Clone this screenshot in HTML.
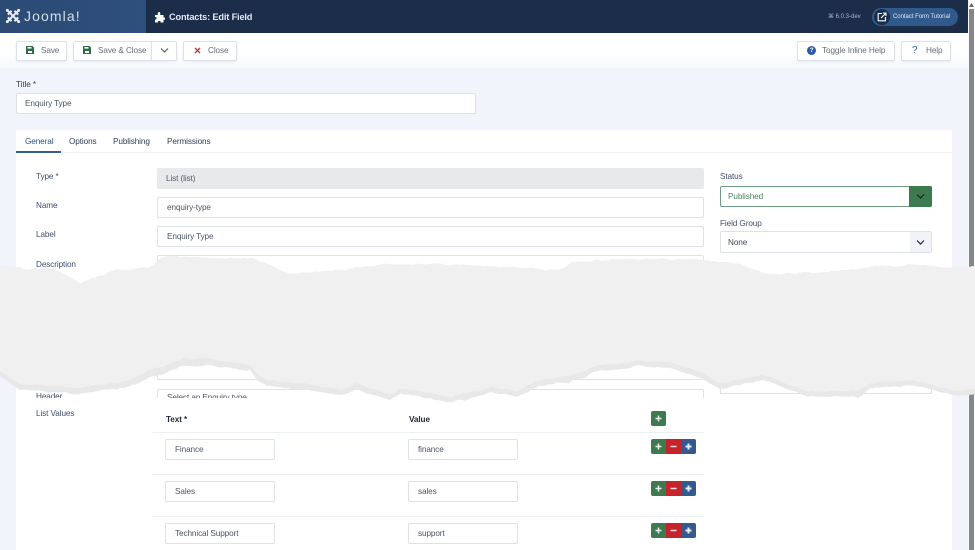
<!DOCTYPE html>
<html><head><meta charset="utf-8"><style>
*{box-sizing:border-box}
html,body{margin:0;padding:0;width:975px;height:550px;overflow:hidden;background:#f1f4fb;font-family:"Liberation Sans",sans-serif;color:#3d4a5c}
.a{position:absolute;white-space:nowrap}
#wrap{position:relative;width:975px;height:550px;overflow:hidden;filter:blur(.35px);font-size:8.2px;letter-spacing:-.1px}
.btn{position:absolute;top:41px;height:20px;background:#fff;border:1px solid #dde2ea;border-radius:2px;line-height:18px;color:#5b6570;box-shadow:0 1px 2px rgba(30,50,90,.08)}
.in{position:absolute;background:#fff;border:1px solid #dde2ea;border-radius:2px;font-size:8.2px;color:#4b5563;padding-left:9px;white-space:nowrap}
.lb{position:absolute;font-size:8.2px;color:#3f4f6b;white-space:nowrap;line-height:10px}
.tab{position:absolute;top:137px;font-size:8.2px;line-height:10px;color:#2e3f57}
.hr{position:absolute;left:152px;width:552px;height:1px;background:#eceff4}
.sq{position:absolute;width:15px;height:15px;color:#fff;text-align:center}
.sq svg{position:absolute;left:4px;top:4px}
.g{background:#3f7a4f}.r{background:#c5242c}.b{background:#33598f}
.t{font-size:8.2px;line-height:10px;color:#646d78}
</style></head><body><div id="wrap">
<!-- header -->
<div class="a" style="left:0;top:0;width:975px;height:33px;background:#1c2d4a"></div>
<div class="a" style="left:0;top:0;width:146px;height:33px;background:linear-gradient(90deg,#2b4a74,#2f4f7c)"></div>
<svg class="a" style="left:5px;top:8px" width="16" height="16" viewBox="0 0 17 17" fill="none" stroke="#e8edf4" stroke-width="2.2"><path d="M3 3L14 14M14 3L3 14M3 7L7 3M10 3L14 7M14 10L10 14M7 14L3 10"/><circle cx="2.5" cy="2.5" r="1.6" fill="#e8edf4" stroke="none"/><circle cx="14.5" cy="2.5" r="1.6" fill="#e8edf4" stroke="none"/><circle cx="2.5" cy="14.5" r="1.6" fill="#e8edf4" stroke="none"/><circle cx="14.5" cy="14.5" r="1.6" fill="#e8edf4" stroke="none"/></svg>
<div class="a" style="left:24px;top:8px;font-size:14px;line-height:17px;color:#d5dde8;letter-spacing:1.1px">Joomla!</div>
<svg class="a" style="left:154px;top:11px" width="11" height="12" viewBox="0 0 11 12" fill="#fff"><path d="M1 4H4C3.4 3 3.6 1 5 1S6.6 3 6 4H9.5V6.5C10.6 6 11 6.6 11 7.6S10.6 9.2 9.5 8.7V11.5H6.5C7 10.4 6.4 10 5.3 10S3.6 10.4 4 11.5H1V8.5C2 9 2.6 8.4 2.6 7.3S2 5.8 1 6.2Z"/></svg>
<div class="a" style="left:169px;top:11px;font-size:9.2px;font-weight:bold;line-height:12px;color:#e3e8f0;letter-spacing:-.15px">Contacts: Edit Field</div>
<div class="a" style="left:828px;top:13px;font-size:6px;line-height:8px;color:#aab5c6;letter-spacing:0">&#8984; 6.0.3-dev</div>
<div class="a" style="left:872px;top:8px;width:86px;height:18px;border-radius:9px;background:#315a8c"></div>
<div class="a" style="left:874px;top:9px;width:16px;height:16px;border-radius:8px;background:#1b2d4c"></div>
<svg class="a" style="left:877px;top:12px" width="10" height="10" viewBox="0 0 10 10" fill="none" stroke="#fff" stroke-width="1.1"><path d="M5 1.5H1.2V8.8H8.5V5M4 6L9 1M6 1H9V4"/></svg>
<div class="a" style="left:893px;top:13px;font-size:6px;line-height:8px;color:#dfe6f0;letter-spacing:-.03px">Contact Form Tutorial</div>
<!-- toolbar -->
<div class="a" style="left:0;top:33px;width:968px;height:35px;background:linear-gradient(180deg,#fff 55%,#f5f7fb)"></div>
<div class="btn" style="left:16px;width:51px"></div>
<svg class="a" style="left:26px;top:46px" width="8" height="8" viewBox="0 0 8 8"><path d="M0 0H6.5L8 1.5V8H0Z" fill="#2f6b45"/><rect x="2" y="5" width="4" height="2" fill="#fff"/><rect x="1.5" y="1" width="4" height="1.6" fill="#fff"/></svg>
<div class="a t" style="left:41px;top:46px">Save</div>
<div class="btn" style="left:73px;width:79px;border-radius:2px 0 0 2px"></div>
<div class="btn" style="left:151px;width:26px;border-radius:0 2px 2px 0"></div>
<svg class="a" style="left:83px;top:46px" width="8" height="8" viewBox="0 0 8 8"><path d="M0 0H6.5L8 1.5V8H0Z" fill="#2f6b45"/><rect x="2" y="5" width="4" height="2" fill="#fff"/><rect x="1.5" y="1" width="4" height="1.6" fill="#fff"/></svg>
<div class="a t" style="left:98px;top:46px">Save &amp; Close</div>
<svg class="a" style="left:160px;top:47px" width="9" height="7" viewBox="0 0 9 7" fill="none" stroke="#4a5462" stroke-width="1.1"><path d="M1 1.5L4.5 5L8 1.5"/></svg>
<div class="btn" style="left:183px;width:54px"></div>
<svg class="a" style="left:194px;top:47px" width="7" height="7" viewBox="0 0 7 7" fill="none" stroke="#c5343c" stroke-width="1.3"><path d="M1 1L6 6M6 1L1 6"/></svg>
<div class="a t" style="left:208px;top:46px">Close</div>
<div class="btn" style="left:797px;width:98px"></div>
<div class="a" style="left:807px;top:46px;width:9px;height:9px;border-radius:5px;background:#2a5aa8;color:#fff;font:bold 6.5px/9px 'Liberation Sans',sans-serif;text-align:center">?</div>
<div class="a t" style="left:822px;top:46px">Toggle Inline Help</div>
<div class="btn" style="left:901px;width:50px"></div>
<div class="a" style="left:912px;top:45px;font-size:10px;line-height:11px;color:#2a5aa8">?</div>
<div class="a t" style="left:926px;top:46px">Help</div>
<!-- title -->
<div class="lb" style="left:16px;top:80px;color:#33425c">Title *</div>
<div class="in" style="left:16px;top:93px;width:460px;height:21px;line-height:19px;padding-left:8px">Enquiry Type</div>
<!-- card -->
<div class="a" style="left:16px;top:130px;width:936px;height:420px;background:#fff"></div>
<div class="a" style="left:16px;top:152px;width:936px;height:1px;background:#f0f2f6"></div>
<div class="a" style="left:16px;top:151px;width:45px;height:1.5px;background:#3a5c8f"></div>
<div class="tab" style="left:25px;color:#2f5286">General</div>
<div class="tab" style="left:69px">Options</div>
<div class="tab" style="left:113px">Publishing</div>
<div class="tab" style="left:167px">Permissions</div>
<!-- left fields -->
<div class="lb" style="left:36px;top:172px">Type *</div>
<div class="a" style="left:157px;top:168px;width:547px;height:21px;background:#e8e9eb;border-radius:2px;line-height:21px;padding-left:9px;color:#545c68">List (list)</div>
<div class="lb" style="left:36px;top:201px">Name</div>
<div class="in" style="left:157px;top:197px;width:547px;height:21px;line-height:19px">enquiry-type</div>
<div class="lb" style="left:36px;top:230px">Label</div>
<div class="in" style="left:157px;top:226px;width:547px;height:21px;line-height:19px">Enquiry Type</div>
<div class="lb" style="left:36px;top:260px">Description</div>
<div class="in" style="left:157px;top:255px;width:547px;height:125px"></div>
<div class="lb" style="left:36px;top:392px">Header</div>
<div class="in" style="left:157px;top:389px;width:547px;height:21px;line-height:16px;border-bottom:0;border-radius:2px 2px 0 0">Select an Enquiry type</div>
<div class="a" style="left:30px;top:398px;width:680px;height:14px;background:#fff"></div>
<!-- right -->
<div class="lb" style="left:720px;top:172px">Status</div>
<div class="a" style="left:720px;top:186px;width:212px;height:21px;background:#fff;border:1px solid #6d9c80;border-radius:2px;line-height:19px;padding-left:7px;color:#4f8462">Published</div>
<div class="a" style="left:909px;top:186px;width:23px;height:21px;background:#3d7a50;border-radius:0 2px 2px 0"></div>
<svg class="a" style="left:916px;top:193px" width="9" height="7" viewBox="0 0 9 7" fill="none" stroke="#14241a" stroke-width="1.2"><path d="M1 1.5L4.5 5L8 1.5"/></svg>
<div class="lb" style="left:720px;top:219px">Field Group</div>
<div class="a" style="left:720px;top:231px;width:212px;height:22px;background:#fff;border:1px solid #dde2ea;border-radius:2px;line-height:21px;padding-left:7px;color:#3d4a5c">None</div>
<div class="a" style="left:910px;top:232px;width:21px;height:20px;background:#f1f3f9"></div>
<svg class="a" style="left:916px;top:239px" width="9" height="7" viewBox="0 0 9 7" fill="none" stroke="#1d2736" stroke-width="1.2"><path d="M1 1.5L4.5 5L8 1.5"/></svg>
<div class="a" style="left:720px;top:380px;width:212px;height:14px;background:#fff;border:1px solid #dde2ea;border-top:0"></div>
<!-- list values -->
<div class="lb" style="left:36px;top:409px">List Values</div>
<div class="a" style="left:166px;top:415px;line-height:10px;font-weight:bold;color:#222b38">Text *</div>
<div class="a" style="left:409px;top:415px;line-height:10px;font-weight:bold;color:#222b38">Value</div>
<div class="sq g" style="left:651px;top:411px;border-radius:2px"><svg width="7" height="7" viewBox="0 0 7 7" stroke="#e8f0ea" stroke-width="1.5"><path d="M3.5 .5V6.5M.5 3.5H6.5"/></svg></div>
<div class="hr" style="top:432px"></div>
<div class="hr" style="top:474px"></div>
<div class="hr" style="top:516px"></div>
<div class="in" style="left:165px;top:439px;width:110px;height:21px;line-height:19px">Finance</div>
<div class="in" style="left:408px;top:439px;width:110px;height:21px;line-height:19px">finance</div>
<div class="in" style="left:165px;top:481px;width:110px;height:21px;line-height:19px">Sales</div>
<div class="in" style="left:408px;top:481px;width:110px;height:21px;line-height:19px">sales</div>
<div class="in" style="left:165px;top:523px;width:110px;height:21px;line-height:19px">Technical Support</div>
<div class="in" style="left:408px;top:523px;width:110px;height:21px;line-height:19px">support</div>
<div class="sq g" style="left:651px;top:439px;border-radius:2px 0 0 2px"><svg width="7" height="7" viewBox="0 0 7 7" stroke="#e8f0ea" stroke-width="1.5"><path d="M3.5 .5V6.5M.5 3.5H6.5"/></svg></div><div class="sq r" style="left:666px;top:439px"><svg width="7" height="7" viewBox="0 0 7 7" stroke="#f6dcdc" stroke-width="1.5"><path d="M.5 3.5H6.5"/></svg></div><div class="sq b" style="left:681px;top:439px;border-radius:0 2px 2px 0"><svg width="7" height="7" viewBox="0 0 7 7" stroke="#e6ecf6" stroke-width="2"><path d="M3.5 .5V6.5M.5 3.5H6.5"/></svg></div>
<div class="sq g" style="left:651px;top:481px;border-radius:2px 0 0 2px"><svg width="7" height="7" viewBox="0 0 7 7" stroke="#e8f0ea" stroke-width="1.5"><path d="M3.5 .5V6.5M.5 3.5H6.5"/></svg></div><div class="sq r" style="left:666px;top:481px"><svg width="7" height="7" viewBox="0 0 7 7" stroke="#f6dcdc" stroke-width="1.5"><path d="M.5 3.5H6.5"/></svg></div><div class="sq b" style="left:681px;top:481px;border-radius:0 2px 2px 0"><svg width="7" height="7" viewBox="0 0 7 7" stroke="#e6ecf6" stroke-width="2"><path d="M3.5 .5V6.5M.5 3.5H6.5"/></svg></div>
<div class="sq g" style="left:651px;top:523px;border-radius:2px 0 0 2px"><svg width="7" height="7" viewBox="0 0 7 7" stroke="#e8f0ea" stroke-width="1.5"><path d="M3.5 .5V6.5M.5 3.5H6.5"/></svg></div><div class="sq r" style="left:666px;top:523px"><svg width="7" height="7" viewBox="0 0 7 7" stroke="#f6dcdc" stroke-width="1.5"><path d="M.5 3.5H6.5"/></svg></div><div class="sq b" style="left:681px;top:523px;border-radius:0 2px 2px 0"><svg width="7" height="7" viewBox="0 0 7 7" stroke="#e6ecf6" stroke-width="2"><path d="M3.5 .5V6.5M.5 3.5H6.5"/></svg></div>
<!-- scrollbar -->
<div class="a" style="left:968px;top:0;width:7px;height:550px;background:#fbfbfb"></div>
<div class="a" style="left:969px;top:9px;width:5px;height:541px;background:#84878b"></div>
<svg class="a" style="left:969px;top:3px" width="5" height="4" viewBox="0 0 5 4"><path d="M2.5 0L5 4H0Z" fill="#666"/></svg>
<!-- torn band -->
<svg class="a" style="left:0;top:0" width="975" height="550" viewBox="0 0 975 550">
<filter id="tear" x="-2%" y="-5%" width="104%" height="110%"><feTurbulence type="fractalNoise" baseFrequency=".09 .05" numOctaves="3" seed="4"/><feDisplacementMap in="SourceGraphic" scale="4"/></filter>
<g filter="url(#tear)">
<path fill="#e8e8e8" d="M-5 265L27 269L53 268L80 283L117 270L150 267L167 256L213 258L253 258L290 274L333 271L377 265L433 264L490 266L557 270L577 262L623 259L690 259L740 264L770 275L823 272L883 266L917 265L950 268L980 267V393L957 396L913 385L873 388L857 397L807 396L763 380L720 389L700 378L670 368L640 366L597 372L570 382L540 386L517 396L490 392L467 400L447 402L400 393L390 400L357 390L340 395L300 389L267 386L257 380L250 370L233 369L207 365L183 367L140 382L127 387L77 394L20 390L-5 373Z"/>
<path fill="#f0f0f0" d="M-5 265L27 269L53 268L80 283L117 270L150 267L167 256L213 258L253 258L290 274L333 271L377 265L433 264L490 266L557 270L577 262L623 259L690 259L740 264L770 275L823 272L883 266L917 265L950 268L980 267V388L957 391L913 380L873 383L857 391L807 391L763 375L720 383L700 372L670 362L640 361L597 366L570 376L540 380L517 390L490 387L467 394L447 396L400 388L390 394L357 384L340 389L300 383L267 380L257 374L250 364L233 363L207 358L183 359L140 375L127 381L77 388L20 384L-5 368Z"/>
</g>
</svg>
</div></body></html>
